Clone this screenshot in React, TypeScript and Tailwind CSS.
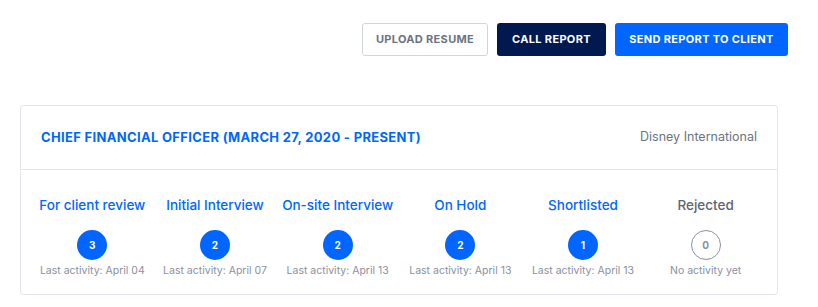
import React from 'react';

interface Stage {
    label: string;
    count: number;
    activity: string;
    active: boolean;
}

const stages: Stage[] = [
    { label: 'For client review', count: 3, activity: 'Last activity: April 04', active: true },
    { label: 'Initial Interview', count: 2, activity: 'Last activity: April 07', active: true },
    { label: 'On-site Interview', count: 2, activity: 'Last activity: April 13', active: true },
    { label: 'On Hold', count: 2, activity: 'Last activity: April 13', active: true },
    { label: 'Shortlisted', count: 1, activity: 'Last activity: April 13', active: true },
    { label: 'Rejected', count: 0, activity: 'No activity yet', active: false },
];

const App: React.FC = () => {
    return (
        <div className="w-[818px] h-[307px] bg-white" style={{ fontFamily: 'Inter, "Noto Sans", sans-serif' }}>
            <div className="flex justify-end gap-[9px] pt-[23px] pr-[30px]">
                <button className="h-[33px] w-[126px] rounded-[3px] border border-[#cfd5df] text-[11px] font-bold tracking-[0.03em] text-[#6b7382]">
                    UPLOAD RESUME
                </button>
                <button className="h-[33px] w-[109px] rounded-[3px] bg-[#001a50] text-[11px] font-bold tracking-[0.03em] text-white">
                    CALL REPORT
                </button>
                <button className="h-[33px] w-[173px] rounded-[3px] bg-[#0066ff] text-[11px] font-bold tracking-[0.03em] text-white">
                    SEND REPORT TO CLIENT
                </button>
            </div>

            <div className="mt-[49px] ml-[20px] w-[758px] rounded-[3px] border border-[#e3e6ee]">
                <div className="flex h-[64px] items-center justify-between border-b border-[#e3e6ee] pl-[20px] pr-[20px]">
                    <span className="text-[13px] font-bold tracking-[0.025em] text-[#0066ff]">
                        CHIEF FINANCIAL OFFICER (MARCH 27, 2020 - PRESENT)
                    </span>
                    <span className="text-[12.5px] text-[#6b7382]">Disney International</span>
                </div>
                <div className="grid grid-cols-6 px-[10px] pt-[26px] pb-[16px]">
                    {stages.map(s => (
                        <div key={s.label} className="flex flex-col items-center">
                            <span className={`text-[13.5px] font-medium leading-[18px] ${s.active ? 'text-[#0066ff]' : 'text-[#5c6473]'}`}>
                                {s.label}
                            </span>
                            <span
                                className={`mt-[16px] flex h-[30px] w-[30px] items-center justify-center rounded-full text-[10px] font-bold ${
                                    s.active ? 'bg-[#0066ff] text-white' : 'border border-[#8a919e] text-[#8a919e]'
                                }`}
                            >
                                {s.count}
                            </span>
                            <span className="mt-[4px] text-[10.5px] leading-[14px] text-[#8a919e]">{s.activity}</span>
                        </div>
                    ))}
                </div>
            </div>
        </div>
    );
};

export default App;
